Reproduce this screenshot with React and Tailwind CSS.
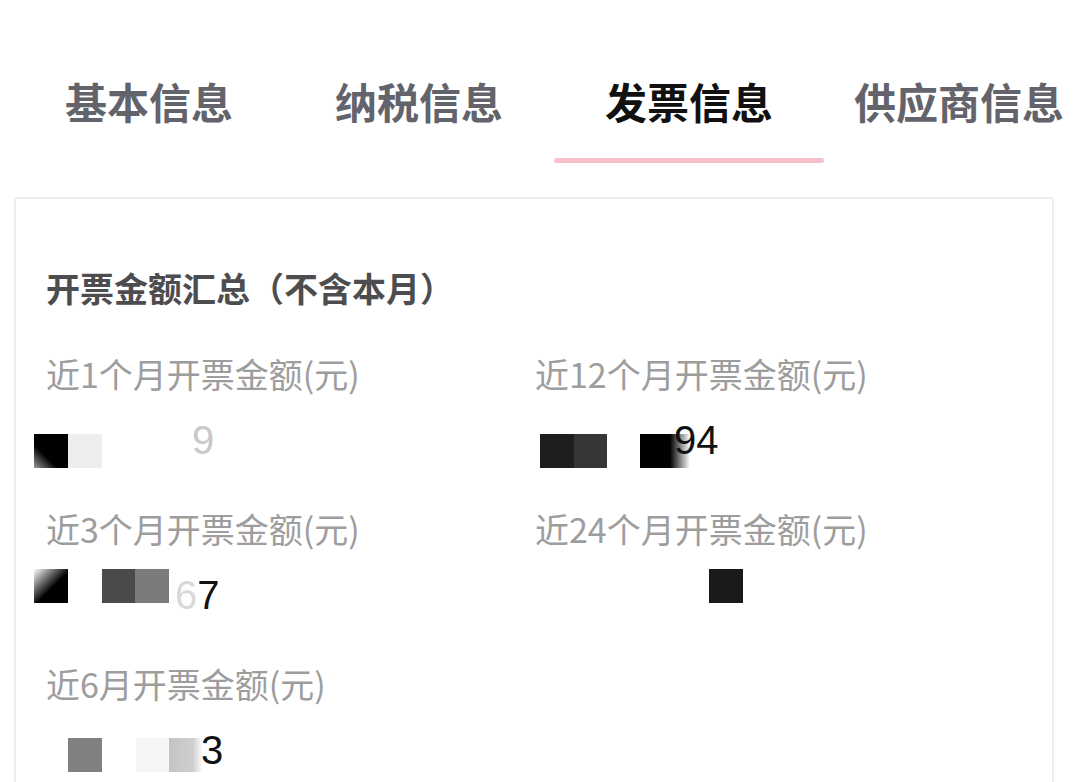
import React from "react";

const CJK = { fontFamily: '"Noto Sans CJK SC", "Noto Sans", sans-serif' };
const NUM = { fontFamily: '"Liberation Sans", Arial, "Noto Sans CJK SC", sans-serif' };

function Tab({ label, active }) {
  return (
    <div className="w-[270px] shrink-0 flex flex-col items-center">
      <div
        style={CJK}
        className={
          "text-[42px] leading-[42px] font-bold whitespace-nowrap " +
          (active ? "text-[#111111]" : "text-[#63646b]")
        }
      >
        {label}
      </div>
      <div
        className={
          "mt-[36px] h-[5px] w-full rounded-full " + (active ? "bg-[#f6c1cb]" : "bg-transparent")
        }
      />
    </div>
  );
}

function Field({ label, children }) {
  return (
    <div className="flex flex-col">
      <div style={CJK} className="text-[34px] leading-[40px] text-[#9d9d9d] whitespace-nowrap">
        {label}
      </div>
      <div
        style={NUM}
        className="mt-[26px] h-[40px] flex items-start text-[40px] leading-[40px] text-[#111111] whitespace-nowrap"
      >
        {children}
      </div>
    </div>
  );
}

export default function App() {
  return (
    <div className="w-[1080px] h-[782px] overflow-hidden bg-white">
      <div className="flex pl-[14px] pt-[80px]">
        <Tab label="基本信息" />
        <Tab label="纳税信息" />
        <Tab label="发票信息" active />
        <Tab label="供应商信息" />
      </div>

      <div className="ml-[14px] mt-[34px] w-[1040px] border-2 border-[#eeeeee] rounded-[3px] pl-[30px] pt-[69px] pb-[80px]">
        <div style={CJK} className="text-[34px] leading-[40px] font-bold text-[#4d4d4f] whitespace-nowrap">
          开票金额汇总（不含本月）
        </div>

        <div className="mt-[46px] grid grid-cols-[489px_489px] gap-y-[49px]">
          <Field label="近1个月开票金额(元)">
            <div className="-ml-[12px] mt-[14px] w-[34px] h-[34px] shrink-0 bg-[linear-gradient(45deg,#9a9a9a_0%,#000000_35%,#000000_100%)]" />
            <div className="mt-[14px] w-[34px] h-[34px] shrink-0 bg-[#eeeeee]" />
            <span className="ml-[90px] text-[#c9c9c9]">9</span>
          </Field>

          <Field label="近12个月开票金额(元)">
            <div className="ml-[5px] mt-[14px] w-[34px] h-[34px] shrink-0 bg-[#1e1e1e]" />
            <div className="mt-[14px] w-[33px] h-[34px] shrink-0 bg-[#363636]" />
            <div className="ml-[33px] mt-[14px] w-[50px] h-[34px] shrink-0 bg-[linear-gradient(90deg,#000000_0%,#000000_60%,#ffffff_100%)]" />
            <span className="-ml-[16px]">94</span>
          </Field>

          <Field label="近3个月开票金额(元)">
            <div className="-ml-[12px] -mt-[6px] w-[34px] h-[34px] shrink-0 bg-[linear-gradient(135deg,#ffffff_0%,#000000_55%,#000000_100%)]" />
            <div className="ml-[34px] -mt-[6px] w-[33px] h-[34px] shrink-0 bg-[#4a4a4a]" />
            <div className="-mt-[6px] w-[34px] h-[34px] shrink-0 bg-[#7b7b7b]" />
            <span className="ml-[6px]">
              <span className="text-[#d9d9d9]">6</span>7
            </span>
          </Field>

          <Field label="近24个月开票金额(元)">
            <div className="ml-[174px] -mt-[6px] w-[34px] h-[34px] shrink-0 bg-[#1a1a1a]" />
          </Field>

          <Field label="近6月开票金额(元)">
            <div className="ml-[22px] mt-[8px] w-[34px] h-[34px] shrink-0 bg-[#808080]" />
            <div className="ml-[34px] mt-[8px] w-[33px] h-[34px] shrink-0 bg-[#f6f6f6]" />
            <div className="mt-[8px] w-[34px] h-[34px] shrink-0 bg-[linear-gradient(90deg,#c4c4c4_0%,#cfcfcf_70%,#ffffff_100%)]" />
            <span className="-ml-[2px]">3</span>
          </Field>
        </div>
      </div>
    </div>
  );
}
